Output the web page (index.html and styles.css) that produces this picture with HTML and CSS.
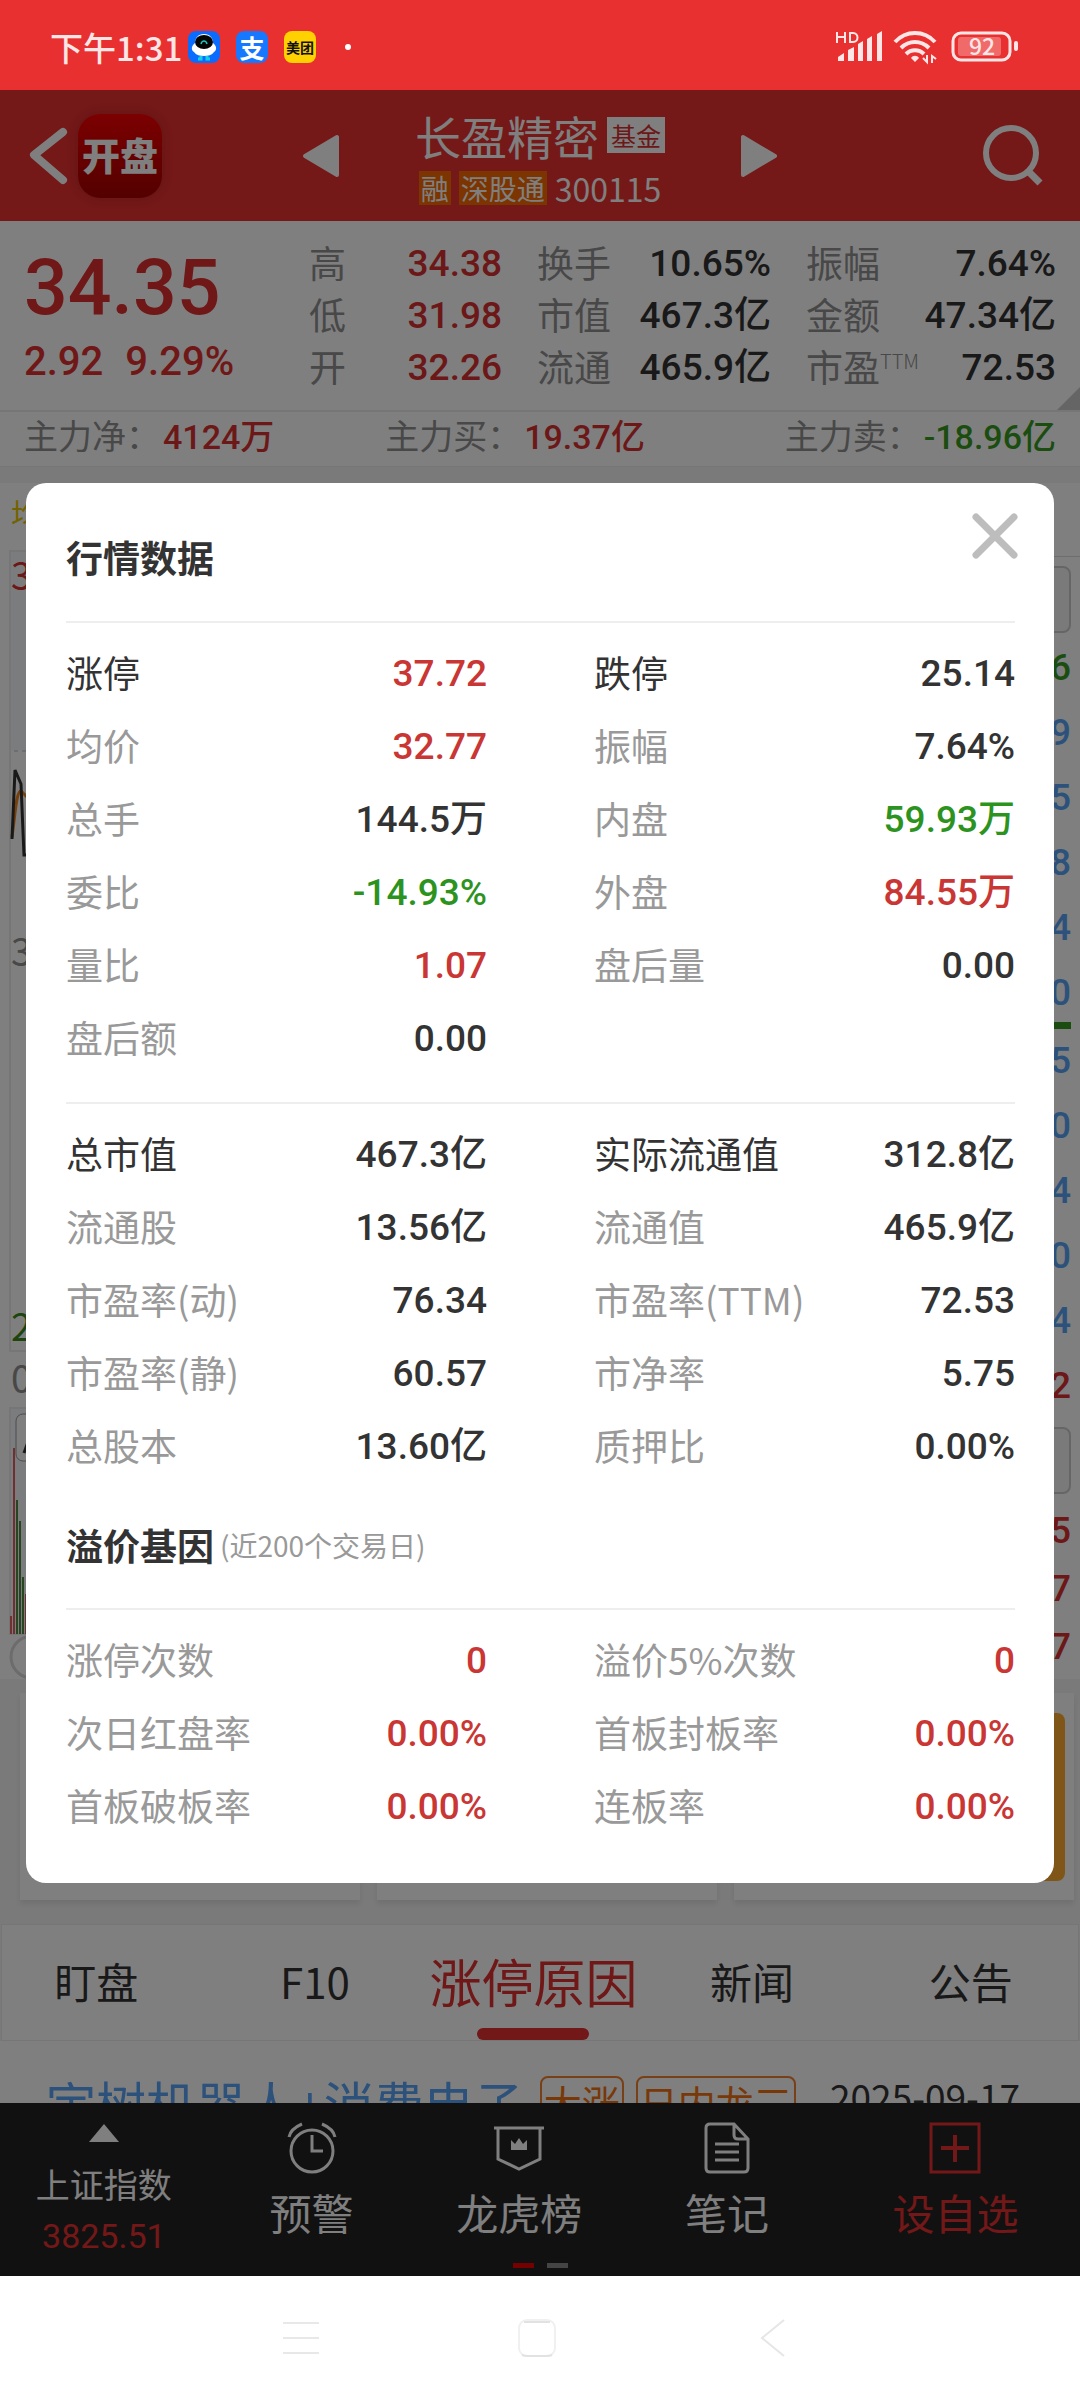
FILE: index.html
```
<!DOCTYPE html>
<html lang="zh-CN">
<head>
	<meta charset="UTF-8">
	<meta name="viewport" content="width=device-width, initial-scale=1">
	<title>长盈精密 300115</title>
	<link rel="stylesheet" href="styles.css">
</head>
<body>
	<div class="status-bar">
		<span class="time">下午1:31</span>
		<svg class="app-icon" viewBox="0 0 32 32">
			<rect width="32" height="32" rx="8" fill="#0a6cff"/>
			<path d="M16 3c-6 0-9 4-9 9-4 3-4 7-1 9 2 3 6 4 10 4s8-1 10-4c3-2 3-6-1-9 0-5-3-9-9-9z" fill="#fff"/>
			<ellipse cx="16" cy="11" rx="9" ry="7" fill="#050505"/>
			<path d="M13 13c1-4 5-4 6 0" fill="none" stroke="#19c8b9" stroke-width="1.5"/>
			<path d="M13 25v3h-3M19 25v3h3" fill="none" stroke="#14cfe0" stroke-width="3"/>
		</svg>
		<span class="app-icon app-pay">支</span>
		<span class="app-icon app-food">美团</span>
		<span class="dot"></span>
		<svg class="signals" viewBox="0 0 184 34" fill="#ffe6e6">
			<path d="M1 2v11M9 2v11M1 7h8M14 3v9h3c6 0 6-9 0-9z" fill="none" stroke="#ffe6e6" stroke-width="2"/>
			<path d="M2 31v-4l6-4v8zM12 31V20l6-3v14zM22 31V14l5-3v20zM31 31V9l5-3v25zM41 31V4l5-3v30z"/>
			<g fill="none" stroke="#ffe6e6" stroke-width="4">
				<path d="M59 12c11-12 29-12 40 0"/>
				<path d="M65 18c8-8 20-8 28 0"/>
				<path d="M70 24c5-5 13-5 18 0"/>
			</g>
			<path d="M79 32l-4-4c2-3 6-3 8 0z"/>
			<path d="M91 25v7l-4-4M96 33v-7l4 3" fill="none" stroke="#ffe6e6" stroke-width="2"/>
			<rect x="117" y="3" width="57" height="27" rx="8" fill="none" stroke="#ffe6e6" stroke-width="3"/>
			<rect x="122" y="7" width="43" height="19" rx="3" fill="#f06a6a"/>
			<rect x="178" y="11" width="4" height="10" rx="2"/>
			<text x="146" y="25" text-anchor="middle" class="battery-text">92</text>
		</svg>
	</div>

	<div class="screen">
		<header class="header">
			<button class="icon-btn back" aria-label="返回">
				<svg width="38" height="56" viewBox="0 0 38 56"><path d="M34 4L5 27l29 25" fill="none" stroke="#fff" stroke-width="8" stroke-linecap="round" stroke-linejoin="round"/></svg>
			</button>
			<div class="logo">开盘</div>
			<button class="icon-btn prev" aria-label="上一只">
				<svg width="38" height="44" viewBox="0 0 38 44"><path d="M3 22L35 3v38z" fill="#fff" stroke="#fff" stroke-width="4" stroke-linejoin="round"/></svg>
			</button>
			<div class="stock">
				<div class="stock-name"><h1>长盈精密</h1><span class="tag-fund">基金</span></div>
				<div class="stock-code"><span class="tag">融</span><span class="tag">深股通</span><span>300115</span></div>
			</div>
			<button class="icon-btn next" aria-label="下一只">
				<svg width="38" height="44" viewBox="0 0 38 44"><path d="M35 22L3 3v38z" fill="#fff" stroke="#fff" stroke-width="4" stroke-linejoin="round"/></svg>
			</button>
			<button class="icon-btn search" aria-label="搜索">
				<svg width="62" height="62" viewBox="0 0 62 62" fill="none" stroke="#fff"><circle cx="29" cy="28" r="25" stroke-width="6"/><path d="M47 47l11 11" stroke-width="7"/></svg>
			</button>
		</header>

		<section class="quote">
			<div class="price">
				<div class="price-now">34.35</div>
				<div class="price-diff"><span>2.92</span><span>9.29%</span></div>
			</div>
			<dl class="stats">
				<div><dt>高</dt><dd class="up">34.38</dd></div>
				<div><dt>低</dt><dd class="up">31.98</dd></div>
				<div><dt>开</dt><dd class="up">32.26</dd></div>
			</dl>
			<dl class="stats">
				<div><dt>换手</dt><dd>10.65%</dd></div>
				<div><dt>市值</dt><dd>467.3亿</dd></div>
				<div><dt>流通</dt><dd>465.9亿</dd></div>
			</dl>
			<dl class="stats">
				<div><dt>振幅</dt><dd>7.64%</dd></div>
				<div><dt>金额</dt><dd>47.34亿</dd></div>
				<div><dt>市盈<sup>TTM</sup></dt><dd>72.53</dd></div>
			</dl>
		</section>

		<section class="flow">
			<div>主力净：<b class="up">4124万</b></div>
			<div>主力买：<b class="up">19.37亿</b></div>
			<div>主力卖：<b class="down">-18.96亿</b></div>
		</section>

		<section class="trade">
			<svg class="chart" width="720" height="1196" viewBox="0 0 720 1196">
				<rect x="10" y="68" width="700" height="800" fill="none" stroke="#ececec" stroke-width="2"/>
				<rect x="11" y="69" width="698" height="198" fill="#f6f8fc"/>
				<path d="M14 268h690" stroke="#ddd" stroke-width="2" stroke-dasharray="4 4"/>
				<text x="11" y="42" font-size="30" fill="#e6c400">均</text>
				<text x="11" y="107" font-size="38" fill="#d93030">3</text>
				<text x="11" y="483" font-size="38" fill="#909090">3</text>
				<text x="11" y="858" font-size="38" fill="#3a8a20">2</text>
				<text x="11" y="910" font-size="38" fill="#909090">0</text>
				<path d="M12 354c3-20 4-46 9-46l8 8 8 20" fill="none" stroke="#f08018" stroke-width="3"/>
				<path d="M12 356l3-69 6 14 3 71h6l8-30" fill="none" stroke="#333" stroke-width="3"/>
				<rect x="10" y="925" width="700" height="226" fill="#f6f8fc" stroke="#ececec" stroke-width="2"/>
				<rect x="16" y="931" width="80" height="47" rx="7" fill="#fff" stroke="#999"/>
				<path d="M24 970l8-22" stroke="#333" stroke-width="3"/>
				<path d="M11 1151v-18M14 1151V965M26 1151v-40" stroke="#e06060" stroke-width="2"/>
				<path d="M17 1151v-134M20 1151v-113M23 1151v-57" stroke="#4d8a40" stroke-width="2"/>
				<circle cx="32" cy="1174" r="21" fill="none" stroke="#d8d8d8" stroke-width="3"/>
			</svg>
			<div class="book">
				<div class="book-head"></div>
				<div class="book-box"></div>
				<ul class="book-list">
					<li class="down">6</li>
					<li>9</li>
					<li>5</li>
					<li>8</li>
					<li>4</li>
					<li>0</li>
				</ul>
				<div class="book-line"></div>
				<ul class="book-list">
					<li>5</li>
					<li>0</li>
					<li>4</li>
					<li>0</li>
					<li>4</li>
					<li class="up">2</li>
				</ul>
				<div class="book-box"></div>
				<ul class="book-list deals">
					<li class="up">5</li>
					<li class="up">7</li>
					<li class="up">7</li>
				</ul>
			</div>
		</section>

		<section class="cards">
			<div class="card"></div>
			<div class="card"></div>
			<div class="card"><div class="gold"></div></div>
		</section>

		<nav class="tabs">
			<ul>
				<li><a href="#watch">盯盘</a></li>
				<li><a href="#f10">F10</a></li>
				<li><a href="#reason" class="active">涨停原因</a></li>
				<li><a href="#news">新闻</a></li>
				<li><a href="#notice">公告</a></li>
			</ul>
		</nav>

		<div class="news">
			<a href="#topic">宇树机器人+消费电子</a>
			<span class="news-tag">大涨</span>
			<span class="news-tag">日内龙三</span>
			<time>2025-09-17</time>
		</div>

		<footer class="toolbar">
			<a href="#index" class="tool index">
				<svg width="30" height="18" viewBox="0 0 30 18"><path d="M15 0l15 18H0z" fill="#fff"/></svg>
				<span>上证指数</span>
				<span class="index-num">3825.51</span>
			</a>
			<button class="tool">
				<svg width="52" height="52" viewBox="0 0 52 52" fill="none" stroke="#fff" stroke-width="3"><circle cx="26" cy="29" r="21"/><path d="M26 13v16h11M3 15c1-5 6-10 13-13M49 15c-1-5-6-10-13-13"/></svg>
				<span>预警</span>
			</button>
			<button class="tool">
				<svg width="52" height="52" viewBox="0 0 52 52" fill="none" stroke="#fff" stroke-width="3"><path d="M1 6h50M5 6v31l21 10 21-10V6"/><path d="M18 28V18l4 4 4-6 4 6 4-4v10z" fill="#fff" stroke="none"/></svg>
				<span>龙虎榜</span>
			</button>
			<button class="tool">
				<svg width="52" height="52" viewBox="0 0 52 52" fill="none" stroke="#fff" stroke-width="3"><path d="M33 2H9q-4 0-4 4v40q0 4 4 4h34q4 0 4-4V17zM33 2v11q0 4 4 4h10M14 22h24M14 30h24M14 38h24"/></svg>
				<span>笔记</span>
			</button>
			<button class="tool add">
				<svg width="52" height="52" viewBox="0 0 52 52" fill="none" stroke="#e63030" stroke-width="3"><path d="M2 2h48v48H2z"/><path d="M26 13v27M12 26h28" stroke-width="4"/></svg>
				<span>设自选</span>
			</button>
			<div class="pager"><i class="on"></i><i></i></div>
		</footer>

		<div class="overlay">
			<div class="modal" role="dialog" aria-labelledby="modal-title">
				<div class="modal-head">
					<h2 id="modal-title">行情数据</h2>
					<button class="icon-btn close" aria-label="关闭">
						<svg width="46" height="46" viewBox="0 0 46 46"><path d="M4 4l38 38M42 4L4 42" stroke="#bdbdbd" stroke-width="7" stroke-linecap="round"/></svg>
					</button>
				</div>
				<dl class="data">
					<div class="main"><dt>涨停</dt><dd class="red">37.72</dd></div>
					<div class="main"><dt>跌停</dt><dd>25.14</dd></div>
					<div><dt>均价</dt><dd class="red">32.77</dd></div>
					<div><dt>振幅</dt><dd>7.64%</dd></div>
					<div><dt>总手</dt><dd>144.5万</dd></div>
					<div><dt>内盘</dt><dd class="green">59.93万</dd></div>
					<div><dt>委比</dt><dd class="green">-14.93%</dd></div>
					<div><dt>外盘</dt><dd class="red">84.55万</dd></div>
					<div><dt>量比</dt><dd class="red">1.07</dd></div>
					<div><dt>盘后量</dt><dd>0.00</dd></div>
					<div><dt>盘后额</dt><dd>0.00</dd></div>
				</dl>
				<dl class="data">
					<div class="main"><dt>总市值</dt><dd>467.3亿</dd></div>
					<div class="main"><dt>实际流通值</dt><dd>312.8亿</dd></div>
					<div><dt>流通股</dt><dd>13.56亿</dd></div>
					<div><dt>流通值</dt><dd>465.9亿</dd></div>
					<div><dt>市盈率(动)</dt><dd>76.34</dd></div>
					<div><dt>市盈率(TTM)</dt><dd>72.53</dd></div>
					<div><dt>市盈率(静)</dt><dd>60.57</dd></div>
					<div><dt>市净率</dt><dd>5.75</dd></div>
					<div><dt>总股本</dt><dd>13.60亿</dd></div>
					<div><dt>质押比</dt><dd>0.00%</dd></div>
				</dl>
				<div class="modal-sub">
					<h2>溢价基因</h2>
					<small>(近200个交易日)</small>
				</div>
				<dl class="data">
					<div><dt>涨停次数</dt><dd class="red">0</dd></div>
					<div><dt>溢价5%次数</dt><dd class="red">0</dd></div>
					<div><dt>次日红盘率</dt><dd class="red">0.00%</dd></div>
					<div><dt>首板封板率</dt><dd class="red">0.00%</dd></div>
					<div><dt>首板破板率</dt><dd class="red">0.00%</dd></div>
					<div><dt>连板率</dt><dd class="red">0.00%</dd></div>
				</dl>
			</div>
		</div>
	</div>

	<div class="nav-bar">
		<button class="icon-btn" aria-label="菜单">
			<svg width="38" height="38" viewBox="0 0 38 38"><path d="M1 4h36M1 19h36M1 34h36" stroke="#e8e8e8" stroke-width="2"/></svg>
		</button>
		<button class="icon-btn" aria-label="主页">
			<svg width="38" height="38" viewBox="0 0 38 38"><rect x="1" y="1" width="36" height="36" rx="8" fill="none" stroke="#f0f0f0" stroke-width="2"/><path d="M6 3h26M4 36q2 1 6 1h18q4 0 6-1" fill="none" stroke="#e2e2e2" stroke-width="2"/></svg>
		</button>
		<button class="icon-btn" aria-label="返回">
			<svg width="38" height="38" viewBox="0 0 38 38"><path d="M30 1L8 19l22 18" fill="none" stroke="#e6e6e6" stroke-width="2"/></svg>
		</button>
	</div>
</body>
</html>
```
FILE: styles.css
```
* {
	box-sizing: border-box;
}

body {
	margin: 0;
	height: 100vh;
	display: flex;
	flex-direction: column;
	font-family: "Noto Sans CJK SC", sans-serif;
	font-size: 37px;
	color: #333;
	background-color: #fff;
}

h1, h2, dl, dd, ul {
	margin: 0;
	padding: 0;
}

ul {
	list-style: none;
}

a {
	color: inherit;
	text-decoration: none;
}

button {
	padding: 0;
	border: none;
	background: none;
	font-family: inherit;
	color: inherit;
}

svg {
	display: block;
	flex: none;
	overflow: visible;
}

.up {
	color: #d93030;
}

.down {
	color: #389a20;
}

/* status bar */
.status-bar {
	flex: none;
	display: flex;
	align-items: center;
	height: 90px;
	padding: 4px 60px 0 50px;
	background-color: #e83030;
	color: #ffe6e6;
}

.time {
	font-size: 33px;
	font-weight: 500;
	line-height: 40px;
	width: 138px;
	white-space: nowrap;
}

.app-icon {
	width: 32px;
	height: 32px;
	margin-right: 16px;
	border-radius: 8px;
	text-align: center;
	font-weight: 700;
	line-height: 32px;
}

.app-pay {
	background-color: #1677ff;
	color: #fff;
	font-size: 25px;
}

.app-food {
	background-color: #ffd100;
	color: #111;
	font-size: 14px;
}

.dot {
	width: 6px;
	height: 6px;
	margin: 0 auto 0 13px;
	border-radius: 50%;
	background-color: #fff;
}

.signals {
	width: 184px;
	height: 34px;
}

.battery-text {
	font-size: 23px;
	font-weight: 500;
}

/* screen */
.screen {
	position: relative;
	flex: 1;
	min-height: 0;
	overflow: hidden;
	display: flex;
	flex-direction: column;
	background-color: #f4f4f4;
}

.screen > * {
	flex: none;
}

.header {
	display: grid;
	grid-template-columns: 49px 84px 140px 38px 1fr 38px 204px 62px;
	align-items: center;
	height: 131px;
	padding: 0 36px 0 29px;
	background-color: #e83030;
	color: #fff;
}

.prev {
	grid-column: 4;
}

.next {
	grid-column: 6;
}

.search {
	grid-column: 8;
}

.logo {
	height: 84px;
	border-radius: 22px;
	background: linear-gradient(#f80000, #a80000);
	box-shadow: 0 0 12px rgba(0,0,0,0.15);
	font-size: 38px;
	font-weight: 900;
	line-height: 80px;
	text-align: center;
	white-space: nowrap;
}

.stock {
	display: flex;
	flex-direction: column;
	align-items: center;
	gap: 8px;
	white-space: nowrap;
}

.stock-name, .stock-code {
	display: flex;
	align-items: center;
	gap: 8px;
}

.stock-name h1 {
	font-size: 46px;
	font-weight: 400;
	line-height: 56px;
}

.tag-fund {
	padding: 0 4px;
	background-color: #fff;
	color: #d83030;
	font-size: 25px;
	line-height: 36px;
}

.stock-code {
	font-size: 32px;
	line-height: 34px;
}

.tag {
	padding: 0 2px;
	background-color: #f86800;
	font-size: 28px;
}

.quote {
	position: relative;
	display: grid;
	grid-template-columns: 250px 193px 234px 1fr;
	column-gap: 35px;
	padding: 17px 24px 16px;
	background-color: #fff;
	border-bottom: 2px solid #ececec;
}

.quote::after {
	content: "";
	position: absolute;
	right: 0;
	bottom: 0;
	border-left: 23px solid transparent;
	border-bottom: 23px solid #cacaca;
}

.price {
	font-family: Roboto, sans-serif;
	font-weight: 500;
	color: #e03030;
}

.price-now {
	font-size: 77px;
	line-height: 100px;
}

.price-diff {
	display: flex;
	gap: 22px;
	font-size: 40px;
	line-height: 48px;
}

.stats div {
	display: flex;
	justify-content: space-between;
	line-height: 52px;
	white-space: nowrap;
}

.stats dt {
	line-height: 48px;
	color: #909090;
}

.stats dd {
	font-family: Roboto, "Noto Sans CJK SC", sans-serif;
	font-weight: 500;
}

.stats sup {
	font-size: 20px;
	font-weight: 300;
	line-height: 20px;
}

.flow {
	display: grid;
	grid-template-columns: 35% 1fr auto;
	padding: 0 24px 6px;
	background-color: #fff;
	border-bottom: 1px solid #ececec;
	font-size: 34px;
	line-height: 46px;
	color: #909090;
	white-space: nowrap;
}

.flow b {
	margin-left: 3px;
	font-family: Roboto, "Noto Sans CJK SC", sans-serif;
	font-weight: 500;
}

/* chart and order book */
.trade {
	display: flex;
	margin-top: 16px;
	background-color: #fff;
}

.book {
	flex: 1;
	margin-right: 9px;
}

.book-head {
	height: 74px;
	margin-right: -9px;
	border-bottom: 1px solid #ddd;
}

.book-box {
	height: 67px;
	margin: 9px 0 2px;
	border: 2px solid #ccc;
	border-radius: 8px;
	background-color: #f4f4f4;
}

.book-list {
	font-family: Roboto, sans-serif;
	font-weight: 500;
	color: #58a4f8;
	text-align: right;
	line-height: 65px;
}

.book-line {
	height: 7px;
	margin: -3px 0 -1px;
	background-color: #389a20;
}

.deals {
	line-height: 58px;
	padding-top: 6px;
}

.cards {
	display: grid;
	grid-template-columns: repeat(3, 1fr);
	gap: 17px;
	padding: 14px 6px 24px 20px;
}

.card {
	height: 207px;
	padding: 20px 9px;
	background-color: #fff;
	box-shadow: 0 4px 5px rgba(0,0,0,0.08);
}

.gold {
	height: 168px;
	border-radius: 8px;
	background-color: #ffac30;
}

.tabs {
	overflow: hidden;
	margin: 0 1px;
	background-color: #fff;
	border: 1px solid #ececec;
}

.tabs ul {
	display: grid;
	grid-template-columns: repeat(5, 1fr);
	margin: 0 -2px 0 -15px;
}

.tabs a {
	position: relative;
	display: block;
	padding-bottom: 4px;
	text-align: center;
	font-size: 42px;
	line-height: 111px;
}

.tabs .active {
	color: #e03030;
	font-size: 52px;
}

.tabs .active::after {
	content: "";
	position: absolute;
	left: 50%;
	bottom: 0;
	width: 112px;
	height: 12px;
	margin-left: -56px;
	border-radius: 6px;
	background-color: #e63030;
}

.screen > .news {
	flex: 1 0 0;
	display: flex;
	align-items: flex-start;
	overflow: hidden;
	padding: 35px 60px 0 46px;
	background-color: #fff;
	white-space: nowrap;
}

.news a {
	font-size: 50px;
	line-height: 52px;
	margin-right: 16px;
	color: #58a4f8;
}

.news-tag {
	padding: 0 2px;
	margin-right: 12px;
	border: 2px solid #f08030;
	border-radius: 8px;
	font-size: 38px;
	line-height: 48px;
	color: #f07010;
}

.news time {
	margin-left: auto;
	line-height: 40px;
}

/* bottom toolbar */
.toolbar {
	position: relative;
	display: grid;
	grid-template-columns: repeat(4, 1fr) 1.2fr;
	height: 173px;
	padding-top: 19px;
	background-color: #222;
	color: #fff;
}

.tool {
	display: flex;
	flex-direction: column;
	align-items: center;
	font-size: 42px;
	line-height: 60px;
}

.tool svg + span {
	margin-top: 8px;
}

.index {
	padding-top: 2px;
	font-size: 34px;
	line-height: 52px;
}

.index svg + span {
	margin-top: 16px;
}

.index-num {
	font-family: Roboto, sans-serif;
	color: #e63030;
}

.add {
	color: #e63030;
}

.pager {
	position: absolute;
	left: 0;
	right: 0;
	bottom: 8px;
	display: flex;
	justify-content: center;
	gap: 13px;
}

.pager i {
	width: 21px;
	height: 5px;
	background-color: #888;
}

.pager .on {
	background-color: #e80000;
}

/* modal */
.overlay {
	position: absolute;
	top: 0;
	right: 0;
	bottom: 0;
	left: 0;
	display: flex;
	align-items: center;
	padding: 0 26px;
	background-color: rgba(0,0,0,0.5);
}

.modal {
	flex: 1;
	padding: 30px 39px 40px 40px;
	border-radius: 20px;
	background-color: #fff;
}

.modal-head {
	display: flex;
	align-items: flex-start;
	justify-content: space-between;
	padding-bottom: 37px;
}

.modal h2 {
	font-size: 37px;
	font-weight: 700;
	line-height: 54px;
}

.modal-head h2 {
	margin-top: 17px;
}

.close {
	margin-right: -3px;
}

.data {
	display: grid;
	grid-template-columns: 1fr 1fr;
	column-gap: 107px;
	padding: 14px 0 27px;
	border-top: 2px solid #eee;
}

.data:last-child {
	padding-bottom: 0;
}

.data div {
	display: flex;
	justify-content: space-between;
	line-height: 73px;
	white-space: nowrap;
}

.data dt {
	line-height: 71px;
	color: #999;
}

.data .main dt {
	color: #333;
}

.data dd {
	font-family: Roboto, "Noto Sans CJK SC", sans-serif;
	font-weight: 500;
}

.data .red {
	color: #c93634;
}

.data .green {
	color: #2d931f;
}

.modal-sub {
	display: flex;
	align-items: center;
	gap: 6px;
	padding: 8px 0 36px;
}

.modal-sub small {
	font-size: 28px;
	color: #999;
}

/* system navigation */
.nav-bar {
	flex: none;
	display: flex;
	justify-content: center;
	align-items: center;
	gap: 198px;
	height: 124px;
	padding-right: 6px;
	background-color: #fff;
}
```
